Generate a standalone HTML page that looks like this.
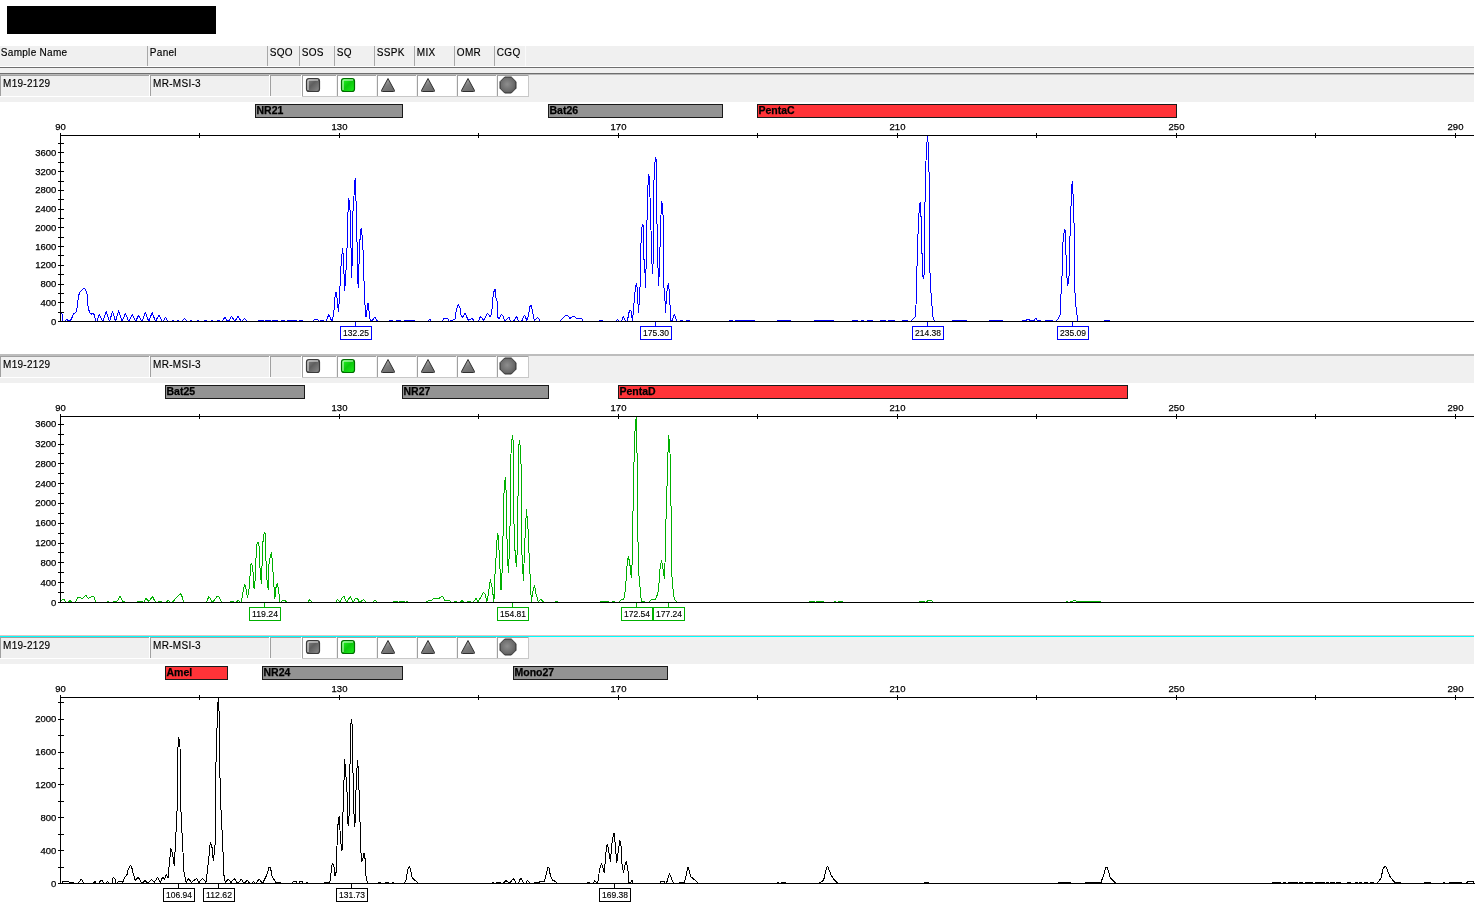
<!DOCTYPE html>
<html><head><meta charset="utf-8"><style>
html,body{margin:0;padding:0;background:#fff;overflow:hidden;}
svg{display:block;will-change:transform;}
text{font-family:"Liberation Sans", sans-serif;}
</style></head><body>
<svg width="1476" height="909" viewBox="0 0 1476 909">
<defs>
<linearGradient id="gsq" x1="0" y1="0" x2="1" y2="1">
<stop offset="0" stop-color="#8a8a8a"/><stop offset="0.45" stop-color="#5e5e5e"/><stop offset="1" stop-color="#8c8c8c"/>
</linearGradient>
<linearGradient id="ggr" x1="0" y1="0" x2="1" y2="1">
<stop offset="0" stop-color="#22ff22"/><stop offset="0.5" stop-color="#0cc80c"/><stop offset="1" stop-color="#1cf01c"/>
</linearGradient>
<linearGradient id="gtri" x1="0.2" y1="0" x2="0.8" y2="1">
<stop offset="0" stop-color="#b4b4b4"/><stop offset="0.5" stop-color="#7c7c7c"/><stop offset="1" stop-color="#6a6a6a"/>
</linearGradient>
<radialGradient id="goct" cx="0.45" cy="0.45" r="0.6">
<stop offset="0" stop-color="#8e8e8e"/><stop offset="0.7" stop-color="#6c6c6c"/><stop offset="1" stop-color="#555"/>
</radialGradient>
</defs>

<rect x="7" y="6" width="209" height="28" fill="#000"/>
<g shape-rendering="crispEdges">
<rect x="0" y="46" width="1474" height="20" fill="#f0f0f0"/>
<rect x="0" y="67" width="1474" height="1" fill="#6e6e6e"/>
<rect x="0" y="68" width="1474" height="5" fill="#f0f0f0"/>
<rect x="147" y="46" width="1" height="20" fill="#a8a8a8"/>
<rect x="267" y="46" width="1" height="20" fill="#a8a8a8"/>
<rect x="299" y="46" width="1" height="20" fill="#a8a8a8"/>
<rect x="334" y="46" width="1" height="20" fill="#a8a8a8"/>
<rect x="374" y="46" width="1" height="20" fill="#a8a8a8"/>
<rect x="414" y="46" width="1" height="20" fill="#a8a8a8"/>
<rect x="454" y="46" width="1" height="20" fill="#a8a8a8"/>
<rect x="494" y="46" width="1" height="20" fill="#a8a8a8"/>
<rect x="525" y="46" width="1" height="20" fill="#fafafa"/>
</g>
<text x="0.8" y="56" font-size="10" letter-spacing="0.3" stroke="#000" stroke-width="0.15" fill="#000">Sample Name</text>
<text x="149.8" y="56" font-size="10" letter-spacing="0.3" stroke="#000" stroke-width="0.15" fill="#000">Panel</text>
<text x="269.8" y="56" font-size="10" letter-spacing="0.3" stroke="#000" stroke-width="0.15" fill="#000">SQO</text>
<text x="301.8" y="56" font-size="10" letter-spacing="0.3" stroke="#000" stroke-width="0.15" fill="#000">SOS</text>
<text x="336.8" y="56" font-size="10" letter-spacing="0.3" stroke="#000" stroke-width="0.15" fill="#000">SQ</text>
<text x="376.8" y="56" font-size="10" letter-spacing="0.3" stroke="#000" stroke-width="0.15" fill="#000">SSPK</text>
<text x="416.8" y="56" font-size="10" letter-spacing="0.3" stroke="#000" stroke-width="0.15" fill="#000">MIX</text>
<text x="456.8" y="56" font-size="10" letter-spacing="0.3" stroke="#000" stroke-width="0.15" fill="#000">OMR</text>
<text x="496.8" y="56" font-size="10" letter-spacing="0.3" stroke="#000" stroke-width="0.15" fill="#000">CGQ</text>
<g shape-rendering="crispEdges">
<rect x="0" y="73" width="1474" height="1" fill="#6e6e6e"/>
<rect x="0" y="74" width="1474" height="1" fill="#b8b8b8"/>
<rect x="0" y="75" width="1474" height="27" fill="#f0f0f0"/>
<rect x="0" y="75" width="149" height="21" fill="#f0f0f0"/>
<rect x="0" y="75" width="149" height="1" fill="#a0a0a0"/>
<rect x="0" y="75" width="1" height="21" fill="#a0a0a0"/>
<rect x="0" y="96" width="150" height="1" fill="#ffffff"/>
<rect x="149" y="75" width="1" height="22" fill="#ffffff"/>
<rect x="150" y="75" width="119" height="21" fill="#f0f0f0"/>
<rect x="150" y="75" width="119" height="1" fill="#a0a0a0"/>
<rect x="150" y="75" width="1" height="21" fill="#a0a0a0"/>
<rect x="150" y="96" width="120" height="1" fill="#ffffff"/>
<rect x="269" y="75" width="1" height="22" fill="#ffffff"/>
<rect x="270" y="75" width="31" height="21" fill="#f0f0f0"/>
<rect x="270" y="75" width="31" height="1" fill="#a0a0a0"/>
<rect x="270" y="75" width="1" height="21" fill="#a0a0a0"/>
<rect x="270" y="96" width="32" height="1" fill="#ffffff"/>
<rect x="301" y="75" width="1" height="22" fill="#ffffff"/>
<rect x="302" y="75" width="34" height="21" fill="#ffffff"/>
<rect x="302" y="75" width="34" height="1" fill="#a0a0a0"/>
<rect x="302" y="75" width="1" height="21" fill="#a0a0a0"/>
<rect x="302" y="96" width="35" height="1" fill="#c8c8c8"/>
<rect x="337" y="75" width="39" height="21" fill="#ffffff"/>
<rect x="337" y="75" width="39" height="1" fill="#a0a0a0"/>
<rect x="337" y="75" width="1" height="21" fill="#a0a0a0"/>
<rect x="337" y="96" width="40" height="1" fill="#c8c8c8"/>
<rect x="377" y="75" width="39" height="21" fill="#ffffff"/>
<rect x="377" y="75" width="39" height="1" fill="#a0a0a0"/>
<rect x="377" y="75" width="1" height="21" fill="#a0a0a0"/>
<rect x="377" y="96" width="40" height="1" fill="#c8c8c8"/>
<rect x="417" y="75" width="39" height="21" fill="#ffffff"/>
<rect x="417" y="75" width="39" height="1" fill="#a0a0a0"/>
<rect x="417" y="75" width="1" height="21" fill="#a0a0a0"/>
<rect x="417" y="96" width="40" height="1" fill="#c8c8c8"/>
<rect x="457" y="75" width="39" height="21" fill="#ffffff"/>
<rect x="457" y="75" width="39" height="1" fill="#a0a0a0"/>
<rect x="457" y="75" width="1" height="21" fill="#a0a0a0"/>
<rect x="457" y="96" width="40" height="1" fill="#c8c8c8"/>
<rect x="497" y="75" width="31" height="21" fill="#ffffff"/>
<rect x="497" y="75" width="31" height="1" fill="#a0a0a0"/>
<rect x="497" y="75" width="1" height="21" fill="#a0a0a0"/>
<rect x="497" y="96" width="32" height="1" fill="#c8c8c8"/>
<rect x="528" y="75" width="1" height="22" fill="#c8c8c8"/>
</g>
<text x="3" y="86.5" font-size="10" letter-spacing="0.3" stroke="#000" stroke-width="0.15">M19-2129</text>
<text x="153" y="86.5" font-size="10" letter-spacing="0.3" stroke="#000" stroke-width="0.15">MR-MSI-3</text>
<rect x="306.5" y="78.5" width="13" height="13" rx="2.5" fill="url(#gsq)" stroke="#3a3a3a" stroke-width="1.2"/><path d="M308 90 V80.5 Q308 80 309 80 H318" fill="none" stroke="#fff" stroke-opacity="0.85" stroke-width="1"/>
<rect x="341.5" y="78.5" width="13" height="13" rx="2.5" fill="url(#ggr)" stroke="#006a00" stroke-width="1.2"/><path d="M343 90 V80.5 Q343 80 344 80 H353" fill="none" stroke="#fff" stroke-opacity="0.85" stroke-width="1"/>
<path d="M388 78.5 L394.5 90.5 Q395 91.5 393.5 91.5 H382.5 Q381 91.5 381.5 90.5 Z" fill="url(#gtri)" stroke="#2e2e2e" stroke-width="1"/>
<path d="M428 78.5 L434.5 90.5 Q435 91.5 433.5 91.5 H422.5 Q421 91.5 421.5 90.5 Z" fill="url(#gtri)" stroke="#2e2e2e" stroke-width="1"/>
<path d="M468 78.5 L474.5 90.5 Q475 91.5 473.5 91.5 H462.5 Q461 91.5 461.5 90.5 Z" fill="url(#gtri)" stroke="#2e2e2e" stroke-width="1"/>
<polygon points="504.7,77.0 511.3,77.0 516.0,81.7 516.0,88.3 511.3,93.0 504.7,93.0 500.0,88.3 500.0,81.7" fill="url(#goct)" stroke="#333" stroke-width="1"/>
<polyline points="60.70,311.80 62.00,314.00 63.10,321.50 65.00,321.50 66.80,319.20 69.20,321.50 71.20,319.30 73.60,313.90 75.80,312.50 77.60,305.70 78.30,296.30 80.00,292.20 83.10,289.10 84.40,288.10 86.10,291.50 87.50,295.60 87.70,305.00 89.50,312.50 91.20,314.20 92.60,313.20 94.60,315.20 95.60,321.50 96.96,321.50 99.33,314.55 102.72,321.50 106.10,311.50 109.49,321.50 112.54,311.50 115.59,321.50 118.64,310.49 122.02,321.50 125.41,313.54 128.80,321.50 132.19,314.55 135.57,321.50 138.62,315.23 142.01,321.50 145.40,312.52 148.79,321.50 152.17,312.52 155.56,321.50 157.59,317.26 155.00,321.50 155.50,321.50 159.00,315.20 162.50,321.50 163.00,321.50 165.50,317.30 168.00,321.50 170.50,321.50 173.00,320.50 175.50,321.50 176.50,321.50 178.00,320.50 179.50,321.50 182.00,321.50 184.50,318.30 187.00,321.50 189.50,321.50 191.00,320.50 192.50,321.50 195.50,321.50 198.00,320.50 200.50,321.50 202.50,321.50 205.50,320.50 208.50,321.50 209.50,321.50 212.00,320.50 214.50,321.50 216.50,321.50 218.50,320.50 220.50,321.50 222.00,321.50 224.80,317.30 227.60,321.50 228.40,321.50 231.60,316.30 234.80,321.50 234.80,321.50 238.00,316.30 241.20,321.50 241.60,321.50 244.40,318.60 247.20,321.50 249.50,321.50 258.20,321.50 259.00,320.50 263.00,320.50 263.80,321.50 264.80,321.50 265.60,320.50 270.30,320.50 271.10,321.50 272.20,321.50 273.00,320.50 277.00,320.50 277.80,321.50 281.00,321.50 281.80,320.50 283.90,320.50 284.70,321.50 287.20,321.50 288.00,320.50 296.00,320.50 296.80,321.50 299.20,321.50 300.00,320.50 302.00,320.50 302.80,321.50 313.60,321.50 314.40,319.10 317.80,319.10 318.60,321.50 320.20,321.50 321.00,320.50 323.80,320.50 324.60,321.50 325.90,321.50 328.80,314.60 331.90,321.50 333.60,315.00 335.30,292.80 336.50,292.80 338.50,312.40 339.90,289.40 340.70,269.70 342.50,247.60 343.30,256.10 344.70,291.10 346.70,258.70 348.40,198.10 349.80,202.40 351.80,278.30 353.00,210.90 355.20,177.70 356.10,203.30 358.10,287.60 360.40,229.70 361.50,228.00 362.90,246.70 364.60,299.60 366.00,316.60 368.00,303.30 370.20,320.50 372.30,320.50 374.80,317.00 377.70,321.50 389.20,321.50 390.00,320.50 392.00,320.50 392.80,321.50 396.20,321.50 397.00,320.50 400.00,320.50 400.80,321.50 404.20,321.50 405.00,320.50 410.00,320.50 410.80,321.50 411.20,321.50 412.00,320.50 414.50,320.50 415.30,321.50 428.00,321.50 429.90,319.20 431.50,321.50 442.00,321.50 444.00,318.20 447.50,318.20 449.00,321.50 452.20,320.50 455.00,318.90 456.30,310.70 458.30,304.30 460.00,308.00 460.70,314.80 462.40,317.50 465.10,313.50 468.50,320.50 472.20,318.20 474.40,321.50 478.50,321.50 480.50,316.20 483.90,320.50 487.60,313.20 490.30,317.30 491.70,313.20 492.70,299.00 493.70,292.20 495.10,289.10 495.70,297.60 496.80,298.30 497.40,306.40 497.80,317.30 499.10,319.30 501.20,314.20 503.20,316.20 504.60,321.50 509.00,317.30 510.70,321.50 513.40,321.50 516.70,316.60 518.40,321.50 521.50,321.50 524.50,315.20 526.90,320.50 528.60,315.20 529.60,307.10 531.00,305.40 532.30,310.50 534.40,320.50 537.70,317.30 540.50,321.50 559.40,321.50 560.80,320.50 564.20,316.60 566.20,315.20 567.50,315.40 570.00,318.40 572.90,316.40 574.40,316.60 576.40,318.40 581.60,318.40 583.30,321.50 588.80,321.50 590.00,321.50 599.20,321.50 600.00,320.50 602.00,320.50 602.80,321.50 616.00,321.50 617.50,319.40 619.50,321.50 621.40,321.50 623.40,316.60 625.90,321.50 627.40,321.50 628.60,313.70 629.80,310.20 631.00,311.20 632.50,320.50 633.40,310.20 634.40,298.40 635.40,288.50 636.40,283.00 637.40,289.50 638.40,313.20 639.40,300.30 640.40,279.00 641.20,232.20 642.40,224.00 643.30,226.20 643.30,258.80 644.30,259.80 645.80,287.50 646.30,245.90 647.30,209.90 648.30,174.30 649.60,178.20 650.00,197.00 651.00,230.20 652.30,273.60 653.20,261.70 653.50,194.00 654.50,167.30 655.50,156.90 656.70,162.90 656.90,223.80 657.70,224.80 657.70,259.80 658.70,285.50 659.70,258.80 660.50,229.20 661.50,201.00 662.70,206.40 663.40,225.20 663.60,287.50 664.60,288.50 665.40,313.20 666.60,294.40 667.60,286.50 668.60,283.50 669.60,297.40 670.80,320.50 672.00,320.50 674.50,314.20 676.50,320.50 677.50,321.50 680.20,321.50 681.00,320.50 682.00,320.50 682.80,321.50 686.20,321.50 687.00,320.50 689.00,320.50 689.80,321.50 729.20,321.50 730.00,320.50 732.00,320.50 732.80,321.50 735.20,321.50 736.00,320.50 740.00,320.50 740.80,321.50 741.20,321.50 742.00,320.50 748.00,320.50 748.80,321.50 749.20,321.50 750.00,320.50 754.00,320.50 754.80,321.50 777.20,321.50 778.00,320.50 790.00,320.50 790.80,321.50 814.20,321.50 815.00,320.50 833.00,320.50 833.80,321.50 852.20,321.50 853.00,320.50 857.00,320.50 857.80,321.50 861.20,321.50 862.00,320.50 863.00,320.50 863.80,321.50 867.20,321.50 868.00,320.50 872.00,320.50 872.80,321.50 880.20,321.50 881.00,320.50 885.00,320.50 885.80,321.50 887.80,321.50 888.60,320.50 894.00,320.50 894.80,321.50 902.20,321.50 903.00,320.50 907.00,320.50 907.80,321.50 910.50,321.50 915.40,316.30 916.00,305.30 916.50,291.00 917.40,247.00 918.50,223.30 919.30,207.40 920.10,202.00 921.20,219.50 921.50,241.50 923.10,278.90 924.20,274.50 924.40,223.90 925.50,184.80 926.20,152.40 927.50,135.30 928.40,147.40 929.20,179.90 929.50,261.90 930.80,289.90 932.10,307.00 933.00,317.40 934.70,321.50 936.00,321.50 952.20,321.50 953.00,320.50 966.80,320.50 967.60,321.50 989.20,321.50 990.00,320.50 1002.00,320.50 1002.80,321.50 1022.20,321.50 1023.00,320.50 1026.00,320.50 1026.80,321.50 1025.90,321.50 1026.70,319.20 1029.70,319.20 1030.50,321.50 1029.20,321.50 1030.00,320.50 1033.00,320.50 1033.80,321.50 1034.00,320.50 1035.80,318.20 1037.50,320.50 1040.00,320.50 1041.00,321.50 1049.00,320.50 1052.00,320.50 1053.00,321.50 1055.30,321.50 1058.40,318.40 1060.10,314.50 1060.60,301.30 1061.40,288.10 1062.30,270.50 1063.20,235.40 1065.00,229.20 1065.90,249.90 1066.30,267.90 1067.60,286.30 1068.90,278.90 1069.80,260.00 1070.30,206.30 1071.10,205.80 1071.60,187.30 1072.50,181.20 1073.30,200.60 1074.20,228.30 1074.60,285.00 1075.50,303.00 1076.80,313.20 1078.10,321.50 1079.00,321.50 1103.70,321.50 1104.50,320.50 1109.80,320.50 1110.60,321.50 1474.00,321.50" fill="none" stroke="#0000ff" stroke-width="1" stroke-linejoin="bevel" shape-rendering="crispEdges"/>
<g shape-rendering="crispEdges" fill="#0000ff"><rect x="355" y="322" width="1" height="5"/><rect x="340" y="326" width="32" height="1"/><rect x="340" y="339" width="32" height="1"/><rect x="340" y="326" width="1" height="14"/><rect x="371" y="326" width="1" height="14"/></g>
<text x="343" y="336" font-size="9.6" textLength="26" lengthAdjust="spacingAndGlyphs" fill="#000" stroke="#000" stroke-width="0.15">132.25</text>
<g shape-rendering="crispEdges" fill="#0000ff"><rect x="655" y="322" width="1" height="5"/><rect x="640" y="326" width="32" height="1"/><rect x="640" y="339" width="32" height="1"/><rect x="640" y="326" width="1" height="14"/><rect x="671" y="326" width="1" height="14"/></g>
<text x="643" y="336" font-size="9.6" textLength="26" lengthAdjust="spacingAndGlyphs" fill="#000" stroke="#000" stroke-width="0.15">175.30</text>
<g shape-rendering="crispEdges" fill="#0000ff"><rect x="927" y="322" width="1" height="5"/><rect x="912" y="326" width="32" height="1"/><rect x="912" y="339" width="32" height="1"/><rect x="912" y="326" width="1" height="14"/><rect x="943" y="326" width="1" height="14"/></g>
<text x="915" y="336" font-size="9.6" textLength="26" lengthAdjust="spacingAndGlyphs" fill="#000" stroke="#000" stroke-width="0.15">214.38</text>
<g shape-rendering="crispEdges" fill="#0000ff"><rect x="1072" y="322" width="1" height="5"/><rect x="1057" y="326" width="32" height="1"/><rect x="1057" y="339" width="32" height="1"/><rect x="1057" y="326" width="1" height="14"/><rect x="1088" y="326" width="1" height="14"/></g>
<text x="1060" y="336" font-size="9.6" textLength="26" lengthAdjust="spacingAndGlyphs" fill="#000" stroke="#000" stroke-width="0.15">235.09</text>
<rect x="255.5" y="104.5" width="147" height="13" fill="#939393" stroke="#1a1a1a" stroke-width="1" stroke-linejoin="bevel" shape-rendering="crispEdges"/>
<text x="256.5" y="114" font-size="10.5" font-weight="bold" fill="#000" stroke="#000" stroke-width="0.25">NR21</text>
<rect x="548.5" y="104.5" width="174" height="13" fill="#939393" stroke="#1a1a1a" stroke-width="1" stroke-linejoin="bevel" shape-rendering="crispEdges"/>
<text x="549.5" y="114" font-size="10.5" font-weight="bold" fill="#000" stroke="#000" stroke-width="0.25">Bat26</text>
<rect x="757.5" y="104.5" width="419" height="13" fill="#ff3338" stroke="#1a1a1a" stroke-width="1" stroke-linejoin="bevel" shape-rendering="crispEdges"/>
<text x="758.5" y="114" font-size="10.5" font-weight="bold" fill="#000" stroke="#000" stroke-width="0.25">PentaC</text>
<g shape-rendering="crispEdges" fill="#000">
<rect x="60" y="135" width="1414" height="1"/>
<rect x="60" y="135" width="1" height="187"/>
<rect x="60" y="321" width="1414" height="1"/>
<rect x="60" y="133" width="1" height="5"/>
<rect x="199" y="133" width="1" height="5"/>
<rect x="339" y="133" width="1" height="5"/>
<rect x="478" y="133" width="1" height="5"/>
<rect x="618" y="133" width="1" height="5"/>
<rect x="757" y="133" width="1" height="5"/>
<rect x="897" y="133" width="1" height="5"/>
<rect x="1036" y="133" width="1" height="5"/>
<rect x="1176" y="133" width="1" height="5"/>
<rect x="1315" y="133" width="1" height="5"/>
<rect x="1455" y="133" width="1" height="5"/>
<rect x="58" y="321" width="6" height="1"/>
<rect x="58" y="312" width="6" height="1"/>
<rect x="58" y="302" width="6" height="1"/>
<rect x="58" y="293" width="6" height="1"/>
<rect x="58" y="284" width="6" height="1"/>
<rect x="58" y="274" width="6" height="1"/>
<rect x="58" y="265" width="6" height="1"/>
<rect x="58" y="255" width="6" height="1"/>
<rect x="58" y="246" width="6" height="1"/>
<rect x="58" y="237" width="6" height="1"/>
<rect x="58" y="227" width="6" height="1"/>
<rect x="58" y="218" width="6" height="1"/>
<rect x="58" y="209" width="6" height="1"/>
<rect x="58" y="199" width="6" height="1"/>
<rect x="58" y="190" width="6" height="1"/>
<rect x="58" y="181" width="6" height="1"/>
<rect x="58" y="171" width="6" height="1"/>
<rect x="58" y="162" width="6" height="1"/>
<rect x="58" y="152" width="6" height="1"/>
<rect x="58" y="143" width="6" height="1"/>
</g>
<text x="60.5" y="129.6" font-size="9.5" text-anchor="middle" stroke="#000" stroke-width="0.25">90</text>
<text x="339.5" y="129.6" font-size="9.5" text-anchor="middle" stroke="#000" stroke-width="0.25">130</text>
<text x="618.5" y="129.6" font-size="9.5" text-anchor="middle" stroke="#000" stroke-width="0.25">170</text>
<text x="897.5" y="129.6" font-size="9.5" text-anchor="middle" stroke="#000" stroke-width="0.25">210</text>
<text x="1176.5" y="129.6" font-size="9.5" text-anchor="middle" stroke="#000" stroke-width="0.25">250</text>
<text x="1455.5" y="129.6" font-size="9.5" text-anchor="middle" stroke="#000" stroke-width="0.25">290</text>
<text x="56.3" y="324.5" font-size="9.5" text-anchor="end" stroke="#000" stroke-width="0.25">0</text>
<text x="56.3" y="305.8" font-size="9.5" text-anchor="end" stroke="#000" stroke-width="0.25">400</text>
<text x="56.3" y="287.1" font-size="9.5" text-anchor="end" stroke="#000" stroke-width="0.25">800</text>
<text x="56.3" y="268.3" font-size="9.5" text-anchor="end" stroke="#000" stroke-width="0.25">1200</text>
<text x="56.3" y="249.6" font-size="9.5" text-anchor="end" stroke="#000" stroke-width="0.25">1600</text>
<text x="56.3" y="230.9" font-size="9.5" text-anchor="end" stroke="#000" stroke-width="0.25">2000</text>
<text x="56.3" y="212.2" font-size="9.5" text-anchor="end" stroke="#000" stroke-width="0.25">2400</text>
<text x="56.3" y="193.4" font-size="9.5" text-anchor="end" stroke="#000" stroke-width="0.25">2800</text>
<text x="56.3" y="174.7" font-size="9.5" text-anchor="end" stroke="#000" stroke-width="0.25">3200</text>
<text x="56.3" y="156.0" font-size="9.5" text-anchor="end" stroke="#000" stroke-width="0.25">3600</text>
<g shape-rendering="crispEdges">
<rect x="0" y="354" width="1474" height="2" fill="#bdbdbd"/>
<rect x="0" y="356" width="1474" height="27" fill="#f0f0f0"/>
<rect x="0" y="356" width="149" height="21" fill="#f0f0f0"/>
<rect x="0" y="356" width="149" height="1" fill="#a0a0a0"/>
<rect x="0" y="356" width="1" height="21" fill="#a0a0a0"/>
<rect x="0" y="377" width="150" height="1" fill="#ffffff"/>
<rect x="149" y="356" width="1" height="22" fill="#ffffff"/>
<rect x="150" y="356" width="119" height="21" fill="#f0f0f0"/>
<rect x="150" y="356" width="119" height="1" fill="#a0a0a0"/>
<rect x="150" y="356" width="1" height="21" fill="#a0a0a0"/>
<rect x="150" y="377" width="120" height="1" fill="#ffffff"/>
<rect x="269" y="356" width="1" height="22" fill="#ffffff"/>
<rect x="270" y="356" width="31" height="21" fill="#f0f0f0"/>
<rect x="270" y="356" width="31" height="1" fill="#a0a0a0"/>
<rect x="270" y="356" width="1" height="21" fill="#a0a0a0"/>
<rect x="270" y="377" width="32" height="1" fill="#ffffff"/>
<rect x="301" y="356" width="1" height="22" fill="#ffffff"/>
<rect x="302" y="356" width="34" height="21" fill="#ffffff"/>
<rect x="302" y="356" width="34" height="1" fill="#a0a0a0"/>
<rect x="302" y="356" width="1" height="21" fill="#a0a0a0"/>
<rect x="302" y="377" width="35" height="1" fill="#c8c8c8"/>
<rect x="337" y="356" width="39" height="21" fill="#ffffff"/>
<rect x="337" y="356" width="39" height="1" fill="#a0a0a0"/>
<rect x="337" y="356" width="1" height="21" fill="#a0a0a0"/>
<rect x="337" y="377" width="40" height="1" fill="#c8c8c8"/>
<rect x="377" y="356" width="39" height="21" fill="#ffffff"/>
<rect x="377" y="356" width="39" height="1" fill="#a0a0a0"/>
<rect x="377" y="356" width="1" height="21" fill="#a0a0a0"/>
<rect x="377" y="377" width="40" height="1" fill="#c8c8c8"/>
<rect x="417" y="356" width="39" height="21" fill="#ffffff"/>
<rect x="417" y="356" width="39" height="1" fill="#a0a0a0"/>
<rect x="417" y="356" width="1" height="21" fill="#a0a0a0"/>
<rect x="417" y="377" width="40" height="1" fill="#c8c8c8"/>
<rect x="457" y="356" width="39" height="21" fill="#ffffff"/>
<rect x="457" y="356" width="39" height="1" fill="#a0a0a0"/>
<rect x="457" y="356" width="1" height="21" fill="#a0a0a0"/>
<rect x="457" y="377" width="40" height="1" fill="#c8c8c8"/>
<rect x="497" y="356" width="31" height="21" fill="#ffffff"/>
<rect x="497" y="356" width="31" height="1" fill="#a0a0a0"/>
<rect x="497" y="356" width="1" height="21" fill="#a0a0a0"/>
<rect x="497" y="377" width="32" height="1" fill="#c8c8c8"/>
<rect x="528" y="356" width="1" height="22" fill="#c8c8c8"/>
</g>
<text x="3" y="367.5" font-size="10" letter-spacing="0.3" stroke="#000" stroke-width="0.15">M19-2129</text>
<text x="153" y="367.5" font-size="10" letter-spacing="0.3" stroke="#000" stroke-width="0.15">MR-MSI-3</text>
<rect x="306.5" y="359.5" width="13" height="13" rx="2.5" fill="url(#gsq)" stroke="#3a3a3a" stroke-width="1.2"/><path d="M308 371 V361.5 Q308 361 309 361 H318" fill="none" stroke="#fff" stroke-opacity="0.85" stroke-width="1"/>
<rect x="341.5" y="359.5" width="13" height="13" rx="2.5" fill="url(#ggr)" stroke="#006a00" stroke-width="1.2"/><path d="M343 371 V361.5 Q343 361 344 361 H353" fill="none" stroke="#fff" stroke-opacity="0.85" stroke-width="1"/>
<path d="M388 359.5 L394.5 371.5 Q395 372.5 393.5 372.5 H382.5 Q381 372.5 381.5 371.5 Z" fill="url(#gtri)" stroke="#2e2e2e" stroke-width="1"/>
<path d="M428 359.5 L434.5 371.5 Q435 372.5 433.5 372.5 H422.5 Q421 372.5 421.5 371.5 Z" fill="url(#gtri)" stroke="#2e2e2e" stroke-width="1"/>
<path d="M468 359.5 L474.5 371.5 Q475 372.5 473.5 372.5 H462.5 Q461 372.5 461.5 371.5 Z" fill="url(#gtri)" stroke="#2e2e2e" stroke-width="1"/>
<polygon points="504.7,358.0 511.3,358.0 516.0,362.7 516.0,369.3 511.3,374.0 504.7,374.0 500.0,369.3 500.0,362.7" fill="url(#goct)" stroke="#333" stroke-width="1"/>
<polyline points="60.00,602.50 62.40,599.40 64.40,599.40 65.80,602.50 68.20,602.50 70.20,600.40 71.90,602.50 75.30,602.50 78.00,597.40 80.40,597.40 82.10,598.60 85.80,595.30 88.50,598.40 91.90,596.50 94.20,596.80 95.60,602.50 106.10,602.50 108.10,601.50 110.20,602.50 112.20,602.50 114.90,601.50 116.90,601.50 120.00,596.50 123.00,601.50 127.80,602.50 128.50,602.50 137.20,602.50 138.00,601.50 142.00,601.50 142.80,602.50 143.50,602.50 146.10,598.40 148.80,601.50 152.50,596.50 155.60,602.50 158.20,602.50 159.00,601.50 161.80,601.50 162.60,602.50 166.20,602.50 168.20,600.40 169.60,601.50 170.90,602.50 173.00,601.50 175.30,599.00 180.40,593.30 182.40,597.40 183.50,602.50 206.20,602.50 208.90,596.50 212.60,602.50 217.30,596.30 219.40,597.40 221.70,602.50 229.40,602.50 230.20,601.50 232.90,601.50 233.70,602.50 236.00,602.50 238.00,600.40 240.70,602.50 241.30,601.50 242.60,594.50 243.50,590.10 244.60,584.20 245.70,586.60 247.50,598.10 248.80,591.00 249.70,581.30 250.60,565.10 251.40,563.30 252.30,566.40 253.20,573.40 254.10,589.30 255.40,577.40 256.30,548.30 257.40,542.20 258.50,542.20 259.40,548.30 260.20,573.90 261.60,583.50 262.40,550.50 263.30,537.30 264.50,532.20 265.50,534.70 266.00,560.70 266.80,577.80 268.20,589.70 269.00,564.20 270.40,555.40 271.50,552.30 272.60,565.10 273.50,579.10 274.80,599.40 276.10,586.60 277.40,583.10 278.70,591.90 280.10,602.50 283.10,600.30 285.30,600.30 286.70,602.50 288.20,602.50 289.00,602.50 290.00,602.50 290.80,602.50 290.20,602.50 291.00,602.50 292.50,602.50 293.30,602.50 295.40,602.50 296.20,602.50 299.00,602.50 299.80,602.50 301.20,602.50 302.00,602.50 304.60,602.50 305.40,602.50 307.50,602.50 309.70,599.60 312.80,602.50 329.70,602.50 330.50,602.50 331.80,602.50 332.60,602.50 335.50,602.50 337.50,599.60 340.20,602.50 341.90,598.00 343.90,596.30 346.70,602.50 350.40,596.30 353.10,602.50 355.50,598.40 357.50,598.40 359.50,602.50 363.60,599.60 366.00,602.50 368.70,602.50 369.50,602.50 371.00,602.50 371.80,602.50 372.50,602.50 375.10,600.20 377.80,602.50 393.10,602.50 393.90,601.50 397.00,601.50 397.80,602.50 398.50,602.50 399.30,601.50 404.70,601.50 405.50,602.50 406.20,602.50 407.00,601.50 407.80,601.50 408.60,602.50 426.10,602.50 428.40,600.40 431.50,600.40 433.50,598.60 438.90,598.40 441.70,596.30 443.30,597.00 444.70,600.40 449.40,600.40 451.10,602.50 453.40,602.50 454.20,601.50 455.90,601.50 456.70,602.50 460.30,602.50 462.00,600.40 464.00,602.50 467.20,602.50 468.00,601.50 470.80,601.50 471.60,602.50 473.20,602.50 475.90,598.40 478.00,601.50 481.10,596.70 483.20,592.50 484.80,593.60 486.90,601.50 488.40,593.60 490.30,579.50 492.10,587.30 493.90,601.50 495.20,569.60 496.60,550.20 497.30,533.50 498.40,536.10 498.90,548.10 499.90,566.40 501.00,589.90 502.60,563.30 503.50,503.20 504.50,483.40 505.50,477.00 506.50,502.20 506.70,530.90 508.30,573.20 509.10,557.00 509.90,541.90 510.50,465.10 511.50,442.30 512.50,434.90 513.40,443.30 513.80,504.70 514.20,540.80 516.40,567.00 517.70,541.30 517.90,506.20 518.60,447.30 519.40,440.00 520.40,448.30 521.40,474.00 521.60,547.60 523.40,581.00 524.50,549.70 525.50,527.20 526.50,509.20 528.20,531.90 529.20,557.00 531.30,601.50 532.90,591.50 534.40,585.20 536.00,593.60 538.10,601.50 541.20,599.30 542.80,601.50 544.00,602.50 555.20,602.50 556.00,601.50 557.00,601.50 557.80,602.50 599.40,602.50 600.20,601.50 608.80,601.50 609.60,602.50 612.10,602.50 612.90,601.50 614.80,601.50 615.60,602.50 615.00,602.50 618.30,602.50 621.60,599.40 623.80,599.10 625.50,589.20 626.60,571.00 627.30,562.20 628.40,556.20 629.90,564.40 631.30,577.60 632.40,558.90 633.30,489.10 634.40,447.10 635.30,423.30 636.40,416.30 637.10,458.90 637.90,504.80 638.10,575.40 639.40,576.50 640.30,592.00 641.40,601.50 649.10,602.50 651.30,599.40 655.70,599.10 657.90,593.00 659.00,583.10 660.10,567.70 661.40,560.60 662.50,565.50 664.50,579.30 665.60,543.00 666.20,508.00 667.60,470.20 668.40,435.20 669.50,442.20 670.60,465.90 671.70,572.70 673.30,593.00 674.40,599.70 677.70,602.50 679.00,602.50 809.20,602.50 810.00,601.50 814.00,601.50 814.80,602.50 816.20,602.50 817.00,601.50 823.60,601.50 824.40,602.50 834.20,602.50 835.00,601.50 835.80,601.50 836.60,602.50 837.70,602.50 838.50,601.50 842.60,601.50 843.40,602.50 919.00,602.50 919.80,601.50 924.70,601.50 925.50,602.50 926.00,602.50 928.50,600.30 931.50,600.30 933.70,602.50 1065.00,602.50 1066.50,601.50 1068.60,602.50 1071.90,601.50 1074.00,600.20 1077.60,601.50 1100.30,601.50 1101.50,602.50 1474.00,602.50" fill="none" stroke="#00b000" stroke-width="1" stroke-linejoin="bevel" shape-rendering="crispEdges"/>
<g shape-rendering="crispEdges" fill="#00b000"><rect x="264" y="603" width="1" height="5"/><rect x="249" y="607" width="32" height="1"/><rect x="249" y="620" width="32" height="1"/><rect x="249" y="607" width="1" height="14"/><rect x="280" y="607" width="1" height="14"/></g>
<text x="252" y="617" font-size="9.6" textLength="26" lengthAdjust="spacingAndGlyphs" fill="#000" stroke="#000" stroke-width="0.15">119.24</text>
<g shape-rendering="crispEdges" fill="#00b000"><rect x="512" y="603" width="1" height="5"/><rect x="497" y="607" width="32" height="1"/><rect x="497" y="620" width="32" height="1"/><rect x="497" y="607" width="1" height="14"/><rect x="528" y="607" width="1" height="14"/></g>
<text x="500" y="617" font-size="9.6" textLength="26" lengthAdjust="spacingAndGlyphs" fill="#000" stroke="#000" stroke-width="0.15">154.81</text>
<g shape-rendering="crispEdges" fill="#00b000"><rect x="636" y="603" width="1" height="5"/><rect x="621" y="607" width="32" height="1"/><rect x="621" y="620" width="32" height="1"/><rect x="621" y="607" width="1" height="14"/><rect x="652" y="607" width="1" height="14"/></g>
<text x="624" y="617" font-size="9.6" textLength="26" lengthAdjust="spacingAndGlyphs" fill="#000" stroke="#000" stroke-width="0.15">172.54</text>
<g shape-rendering="crispEdges" fill="#00b000"><rect x="668" y="603" width="1" height="5"/><rect x="653" y="607" width="32" height="1"/><rect x="653" y="620" width="32" height="1"/><rect x="653" y="607" width="1" height="14"/><rect x="684" y="607" width="1" height="14"/></g>
<text x="656" y="617" font-size="9.6" textLength="26" lengthAdjust="spacingAndGlyphs" fill="#000" stroke="#000" stroke-width="0.15">177.24</text>
<rect x="165.5" y="385.5" width="139" height="13" fill="#939393" stroke="#1a1a1a" stroke-width="1" stroke-linejoin="bevel" shape-rendering="crispEdges"/>
<text x="166.5" y="395" font-size="10.5" font-weight="bold" fill="#000" stroke="#000" stroke-width="0.25">Bat25</text>
<rect x="402.5" y="385.5" width="146" height="13" fill="#939393" stroke="#1a1a1a" stroke-width="1" stroke-linejoin="bevel" shape-rendering="crispEdges"/>
<text x="403.5" y="395" font-size="10.5" font-weight="bold" fill="#000" stroke="#000" stroke-width="0.25">NR27</text>
<rect x="618.5" y="385.5" width="509" height="13" fill="#ff3338" stroke="#1a1a1a" stroke-width="1" stroke-linejoin="bevel" shape-rendering="crispEdges"/>
<text x="619.5" y="395" font-size="10.5" font-weight="bold" fill="#000" stroke="#000" stroke-width="0.25">PentaD</text>
<g shape-rendering="crispEdges" fill="#000">
<rect x="60" y="416" width="1414" height="1"/>
<rect x="60" y="416" width="1" height="187"/>
<rect x="60" y="602" width="1414" height="1"/>
<rect x="60" y="414" width="1" height="5"/>
<rect x="199" y="414" width="1" height="5"/>
<rect x="339" y="414" width="1" height="5"/>
<rect x="478" y="414" width="1" height="5"/>
<rect x="618" y="414" width="1" height="5"/>
<rect x="757" y="414" width="1" height="5"/>
<rect x="897" y="414" width="1" height="5"/>
<rect x="1036" y="414" width="1" height="5"/>
<rect x="1176" y="414" width="1" height="5"/>
<rect x="1315" y="414" width="1" height="5"/>
<rect x="1455" y="414" width="1" height="5"/>
<rect x="58" y="602" width="6" height="1"/>
<rect x="58" y="592" width="6" height="1"/>
<rect x="58" y="582" width="6" height="1"/>
<rect x="58" y="572" width="6" height="1"/>
<rect x="58" y="562" width="6" height="1"/>
<rect x="58" y="552" width="6" height="1"/>
<rect x="58" y="543" width="6" height="1"/>
<rect x="58" y="533" width="6" height="1"/>
<rect x="58" y="523" width="6" height="1"/>
<rect x="58" y="513" width="6" height="1"/>
<rect x="58" y="503" width="6" height="1"/>
<rect x="58" y="493" width="6" height="1"/>
<rect x="58" y="483" width="6" height="1"/>
<rect x="58" y="473" width="6" height="1"/>
<rect x="58" y="463" width="6" height="1"/>
<rect x="58" y="453" width="6" height="1"/>
<rect x="58" y="444" width="6" height="1"/>
<rect x="58" y="434" width="6" height="1"/>
<rect x="58" y="424" width="6" height="1"/>
</g>
<text x="60.5" y="410.6" font-size="9.5" text-anchor="middle" stroke="#000" stroke-width="0.25">90</text>
<text x="339.5" y="410.6" font-size="9.5" text-anchor="middle" stroke="#000" stroke-width="0.25">130</text>
<text x="618.5" y="410.6" font-size="9.5" text-anchor="middle" stroke="#000" stroke-width="0.25">170</text>
<text x="897.5" y="410.6" font-size="9.5" text-anchor="middle" stroke="#000" stroke-width="0.25">210</text>
<text x="1176.5" y="410.6" font-size="9.5" text-anchor="middle" stroke="#000" stroke-width="0.25">250</text>
<text x="1455.5" y="410.6" font-size="9.5" text-anchor="middle" stroke="#000" stroke-width="0.25">290</text>
<text x="56.3" y="605.5" font-size="9.5" text-anchor="end" stroke="#000" stroke-width="0.25">0</text>
<text x="56.3" y="585.7" font-size="9.5" text-anchor="end" stroke="#000" stroke-width="0.25">400</text>
<text x="56.3" y="565.9" font-size="9.5" text-anchor="end" stroke="#000" stroke-width="0.25">800</text>
<text x="56.3" y="546.1" font-size="9.5" text-anchor="end" stroke="#000" stroke-width="0.25">1200</text>
<text x="56.3" y="526.3" font-size="9.5" text-anchor="end" stroke="#000" stroke-width="0.25">1600</text>
<text x="56.3" y="506.4" font-size="9.5" text-anchor="end" stroke="#000" stroke-width="0.25">2000</text>
<text x="56.3" y="486.6" font-size="9.5" text-anchor="end" stroke="#000" stroke-width="0.25">2400</text>
<text x="56.3" y="466.8" font-size="9.5" text-anchor="end" stroke="#000" stroke-width="0.25">2800</text>
<text x="56.3" y="447.0" font-size="9.5" text-anchor="end" stroke="#000" stroke-width="0.25">3200</text>
<text x="56.3" y="427.2" font-size="9.5" text-anchor="end" stroke="#000" stroke-width="0.25">3600</text>
<g shape-rendering="crispEdges">
<rect x="0" y="635" width="1474" height="1" fill="#d8c8c8"/>
<rect x="0" y="636" width="1474" height="1" fill="#00ffff"/>
<rect x="0" y="637" width="1474" height="27" fill="#f0f0f0"/>
<rect x="0" y="637" width="149" height="21" fill="#f0f0f0"/>
<rect x="0" y="637" width="149" height="1" fill="#a0a0a0"/>
<rect x="0" y="637" width="1" height="21" fill="#a0a0a0"/>
<rect x="0" y="658" width="150" height="1" fill="#ffffff"/>
<rect x="149" y="637" width="1" height="22" fill="#ffffff"/>
<rect x="150" y="637" width="119" height="21" fill="#f0f0f0"/>
<rect x="150" y="637" width="119" height="1" fill="#a0a0a0"/>
<rect x="150" y="637" width="1" height="21" fill="#a0a0a0"/>
<rect x="150" y="658" width="120" height="1" fill="#ffffff"/>
<rect x="269" y="637" width="1" height="22" fill="#ffffff"/>
<rect x="270" y="637" width="31" height="21" fill="#f0f0f0"/>
<rect x="270" y="637" width="31" height="1" fill="#a0a0a0"/>
<rect x="270" y="637" width="1" height="21" fill="#a0a0a0"/>
<rect x="270" y="658" width="32" height="1" fill="#ffffff"/>
<rect x="301" y="637" width="1" height="22" fill="#ffffff"/>
<rect x="302" y="637" width="34" height="21" fill="#ffffff"/>
<rect x="302" y="637" width="34" height="1" fill="#a0a0a0"/>
<rect x="302" y="637" width="1" height="21" fill="#a0a0a0"/>
<rect x="302" y="658" width="35" height="1" fill="#c8c8c8"/>
<rect x="337" y="637" width="39" height="21" fill="#ffffff"/>
<rect x="337" y="637" width="39" height="1" fill="#a0a0a0"/>
<rect x="337" y="637" width="1" height="21" fill="#a0a0a0"/>
<rect x="337" y="658" width="40" height="1" fill="#c8c8c8"/>
<rect x="377" y="637" width="39" height="21" fill="#ffffff"/>
<rect x="377" y="637" width="39" height="1" fill="#a0a0a0"/>
<rect x="377" y="637" width="1" height="21" fill="#a0a0a0"/>
<rect x="377" y="658" width="40" height="1" fill="#c8c8c8"/>
<rect x="417" y="637" width="39" height="21" fill="#ffffff"/>
<rect x="417" y="637" width="39" height="1" fill="#a0a0a0"/>
<rect x="417" y="637" width="1" height="21" fill="#a0a0a0"/>
<rect x="417" y="658" width="40" height="1" fill="#c8c8c8"/>
<rect x="457" y="637" width="39" height="21" fill="#ffffff"/>
<rect x="457" y="637" width="39" height="1" fill="#a0a0a0"/>
<rect x="457" y="637" width="1" height="21" fill="#a0a0a0"/>
<rect x="457" y="658" width="40" height="1" fill="#c8c8c8"/>
<rect x="497" y="637" width="31" height="21" fill="#ffffff"/>
<rect x="497" y="637" width="31" height="1" fill="#a0a0a0"/>
<rect x="497" y="637" width="1" height="21" fill="#a0a0a0"/>
<rect x="497" y="658" width="32" height="1" fill="#c8c8c8"/>
<rect x="528" y="637" width="1" height="22" fill="#c8c8c8"/>
</g>
<text x="3" y="648.5" font-size="10" letter-spacing="0.3" stroke="#000" stroke-width="0.15">M19-2129</text>
<text x="153" y="648.5" font-size="10" letter-spacing="0.3" stroke="#000" stroke-width="0.15">MR-MSI-3</text>
<rect x="306.5" y="640.5" width="13" height="13" rx="2.5" fill="url(#gsq)" stroke="#3a3a3a" stroke-width="1.2"/><path d="M308 652 V642.5 Q308 642 309 642 H318" fill="none" stroke="#fff" stroke-opacity="0.85" stroke-width="1"/>
<rect x="341.5" y="640.5" width="13" height="13" rx="2.5" fill="url(#ggr)" stroke="#006a00" stroke-width="1.2"/><path d="M343 652 V642.5 Q343 642 344 642 H353" fill="none" stroke="#fff" stroke-opacity="0.85" stroke-width="1"/>
<path d="M388 640.5 L394.5 652.5 Q395 653.5 393.5 653.5 H382.5 Q381 653.5 381.5 652.5 Z" fill="url(#gtri)" stroke="#2e2e2e" stroke-width="1"/>
<path d="M428 640.5 L434.5 652.5 Q435 653.5 433.5 653.5 H422.5 Q421 653.5 421.5 652.5 Z" fill="url(#gtri)" stroke="#2e2e2e" stroke-width="1"/>
<path d="M468 640.5 L474.5 652.5 Q475 653.5 473.5 653.5 H462.5 Q461 653.5 461.5 652.5 Z" fill="url(#gtri)" stroke="#2e2e2e" stroke-width="1"/>
<polygon points="504.7,639.0 511.3,639.0 516.0,643.7 516.0,650.3 511.3,655.0 504.7,655.0 500.0,650.3 500.0,643.7" fill="url(#goct)" stroke="#333" stroke-width="1"/>
<polyline points="60.50,883.50 62.20,883.50 63.00,881.40 68.80,881.40 69.60,883.50 68.70,883.50 69.50,882.50 73.60,882.50 74.40,883.50 78.00,883.50 81.40,879.00 83.70,883.50 93.20,883.50 94.90,881.30 96.60,883.50 99.50,883.50 100.30,880.40 102.00,880.60 104.10,883.50 106.40,883.50 107.50,881.30 109.50,883.50 111.90,883.50 113.20,877.40 115.60,879.40 115.90,883.50 117.50,883.50 118.30,881.30 121.70,881.30 123.00,882.50 124.40,877.40 127.10,874.60 128.10,869.90 130.50,865.20 131.80,867.50 132.90,872.60 135.20,880.40 138.30,877.40 142.00,883.50 145.10,880.40 147.80,883.50 151.50,879.40 154.20,882.50 157.60,877.40 160.20,882.50 162.80,876.80 164.50,879.90 166.20,874.20 168.00,877.70 169.70,859.50 170.90,848.30 172.60,853.50 174.30,866.40 175.70,838.80 177.10,809.40 178.00,747.30 178.80,737.30 180.00,747.30 180.90,809.40 182.30,838.80 184.00,871.60 186.10,882.50 188.70,878.50 191.30,882.50 196.50,878.50 199.00,882.50 202.50,878.20 206.00,882.50 208.50,861.30 210.30,842.30 212.00,847.40 213.40,861.30 215.10,844.00 215.50,780.10 216.70,738.00 217.60,708.00 218.30,697.50 218.90,701.00 219.60,760.00 220.60,802.50 222.40,837.10 224.10,877.70 225.50,882.50 228.40,878.90 231.00,882.50 234.40,878.40 235.40,880.40 237.80,883.50 241.50,879.00 243.90,883.50 247.60,880.10 249.60,883.50 251.30,883.50 253.40,881.30 255.70,883.50 259.10,879.00 262.50,883.50 266.60,875.30 267.90,871.90 268.60,867.50 270.00,867.50 271.30,871.30 272.00,876.00 274.70,880.70 276.10,882.50 280.00,882.50 280.80,883.50 292.50,883.50 293.30,881.30 296.40,881.30 297.20,883.50 298.70,883.50 299.50,881.30 302.20,881.30 303.00,883.50 305.40,883.50 306.20,882.50 306.90,882.50 307.70,883.50 324.10,883.50 324.90,882.50 328.00,882.50 328.80,883.50 329.60,883.50 330.60,878.00 331.60,865.90 332.60,863.60 334.10,866.90 335.00,875.50 336.20,871.90 337.00,846.10 337.70,829.40 338.40,818.80 339.40,816.30 340.00,830.40 341.00,844.10 342.00,850.70 342.70,822.30 343.60,794.20 344.60,759.00 345.60,770.90 347.20,795.10 348.10,826.40 349.30,813.20 349.70,786.70 350.50,727.30 351.50,719.10 352.20,726.30 353.20,783.30 353.90,812.20 354.90,827.40 355.70,797.60 356.70,774.20 357.40,760.00 358.40,769.40 359.10,793.20 360.00,821.80 361.30,862.30 363.00,857.80 364.00,853.50 365.30,859.80 366.00,876.00 367.50,883.50 368.50,883.50 378.30,883.50 379.10,882.50 380.80,882.50 381.60,883.50 384.40,883.50 385.20,882.50 388.00,882.50 388.80,883.50 392.20,883.50 393.00,882.50 393.70,882.50 394.50,883.50 404.20,883.50 406.60,879.00 407.30,870.60 409.30,866.50 410.30,868.90 411.30,873.30 412.30,878.00 417.40,882.50 418.40,883.50 491.60,883.50 492.40,882.50 493.00,882.50 493.80,883.50 496.30,883.50 497.10,882.50 500.80,882.50 501.60,883.50 503.20,883.50 505.90,880.40 508.60,882.50 509.30,883.50 513.40,878.40 516.40,883.50 518.40,883.50 520.50,878.40 521.50,879.00 523.90,883.50 525.60,883.50 527.60,880.40 530.60,883.50 533.50,883.50 534.40,882.50 539.80,882.50 540.10,881.10 544.90,881.10 545.20,876.70 546.60,873.30 547.60,867.50 548.90,867.50 550.60,876.70 552.70,880.10 554.30,880.70 557.40,883.50 558.50,883.50 587.20,883.50 588.00,882.50 589.80,882.50 590.60,883.50 593.30,883.50 594.70,880.50 596.90,883.50 598.20,880.30 599.50,869.50 601.50,863.30 603.00,868.20 604.30,873.40 605.50,858.00 606.60,846.10 607.40,844.40 608.80,851.40 610.50,862.40 611.40,847.50 612.70,838.20 614.00,833.40 615.40,845.30 616.70,863.30 618.40,850.50 619.80,840.40 621.10,846.10 622.00,863.80 623.50,873.40 625.00,864.60 626.40,860.70 628.10,871.70 629.00,882.50 630.30,883.50 632.10,880.50 633.40,883.50 659.90,883.50 660.70,881.40 664.20,881.40 665.00,883.50 666.40,883.50 669.50,873.40 673.50,883.50 679.20,883.50 680.00,882.50 683.60,882.50 684.40,883.50 685.40,878.30 688.00,866.80 690.70,876.50 696.40,881.40 698.10,883.50 776.40,883.50 777.20,882.50 778.60,882.50 779.40,883.50 781.20,883.50 782.00,882.50 785.40,882.50 786.20,883.50 817.90,883.50 822.60,881.40 824.00,878.50 826.70,866.90 828.00,866.90 830.80,874.40 834.10,879.80 838.20,883.50 839.00,883.50 923.40,883.50 924.20,882.50 928.00,882.50 928.80,883.50 1057.40,883.50 1058.20,882.50 1069.90,882.50 1070.70,883.50 1098.70,882.50 1101.00,882.50 1104.10,873.40 1105.70,867.50 1107.30,867.50 1110.40,878.00 1115.80,883.50 1117.00,883.50 1272.20,883.50 1273.00,882.50 1275.09,882.50 1275.89,883.50 1276.06,883.50 1276.86,882.50 1280.65,882.50 1281.45,883.50 1282.60,883.50 1283.40,882.50 1285.06,882.50 1285.86,883.50 1287.58,883.50 1288.38,882.50 1291.05,882.50 1291.85,883.50 1292.22,883.50 1293.02,882.50 1297.01,882.50 1297.81,883.50 1298.79,883.50 1299.59,882.50 1302.47,882.50 1303.27,883.50 1304.44,883.50 1305.24,882.50 1307.12,882.50 1307.92,883.50 1308.12,883.50 1308.92,882.50 1312.74,882.50 1313.54,883.50 1314.92,883.50 1315.72,882.50 1318.90,882.50 1319.70,883.50 1319.92,883.50 1320.72,882.50 1324.61,882.50 1325.41,883.50 1325.91,883.50 1326.71,882.50 1328.29,882.50 1329.09,883.50 1329.94,883.50 1330.74,882.50 1334.03,882.50 1334.83,883.50 1336.16,883.50 1336.96,882.50 1340.77,882.50 1341.57,883.50 1347.20,883.50 1348.00,882.50 1350.37,882.50 1351.17,883.50 1354.46,883.50 1355.26,882.50 1356.96,882.50 1357.76,883.50 1359.26,883.50 1360.06,882.50 1361.61,882.50 1362.41,883.50 1364.29,883.50 1365.09,882.50 1366.98,882.50 1367.78,883.50 1370.20,883.50 1371.00,882.50 1373.67,882.50 1374.47,883.50 1377.10,883.50 1380.90,878.30 1383.20,868.40 1385.50,866.10 1387.00,869.10 1390.10,876.80 1394.70,882.50 1394.70,883.50 1395.50,882.50 1400.80,882.50 1401.60,883.50 1423.80,883.50 1424.60,882.50 1430.70,882.50 1431.50,883.50 1442.70,883.50 1443.50,882.50 1444.30,882.50 1445.10,883.50 1449.00,883.50 1449.80,882.50 1461.30,882.50 1462.10,883.50 1466.60,883.50 1467.40,881.40 1473.50,881.40 1474.30,883.50 1474.00,883.50" fill="none" stroke="#000000" stroke-width="1" stroke-linejoin="bevel" shape-rendering="crispEdges"/>
<g shape-rendering="crispEdges" fill="#000000"><rect x="178" y="884" width="1" height="5"/><rect x="163" y="888" width="32" height="1"/><rect x="163" y="901" width="32" height="1"/><rect x="163" y="888" width="1" height="14"/><rect x="194" y="888" width="1" height="14"/></g>
<text x="166" y="898" font-size="9.6" textLength="26" lengthAdjust="spacingAndGlyphs" fill="#000" stroke="#000" stroke-width="0.15">106.94</text>
<g shape-rendering="crispEdges" fill="#000000"><rect x="218" y="884" width="1" height="5"/><rect x="203" y="888" width="32" height="1"/><rect x="203" y="901" width="32" height="1"/><rect x="203" y="888" width="1" height="14"/><rect x="234" y="888" width="1" height="14"/></g>
<text x="206" y="898" font-size="9.6" textLength="26" lengthAdjust="spacingAndGlyphs" fill="#000" stroke="#000" stroke-width="0.15">112.62</text>
<g shape-rendering="crispEdges" fill="#000000"><rect x="351" y="884" width="1" height="5"/><rect x="336" y="888" width="32" height="1"/><rect x="336" y="901" width="32" height="1"/><rect x="336" y="888" width="1" height="14"/><rect x="367" y="888" width="1" height="14"/></g>
<text x="339" y="898" font-size="9.6" textLength="26" lengthAdjust="spacingAndGlyphs" fill="#000" stroke="#000" stroke-width="0.15">131.73</text>
<g shape-rendering="crispEdges" fill="#000000"><rect x="614" y="884" width="1" height="5"/><rect x="599" y="888" width="32" height="1"/><rect x="599" y="901" width="32" height="1"/><rect x="599" y="888" width="1" height="14"/><rect x="630" y="888" width="1" height="14"/></g>
<text x="602" y="898" font-size="9.6" textLength="26" lengthAdjust="spacingAndGlyphs" fill="#000" stroke="#000" stroke-width="0.15">169.38</text>
<rect x="165.5" y="666.5" width="62" height="13" fill="#ff3338" stroke="#1a1a1a" stroke-width="1" stroke-linejoin="bevel" shape-rendering="crispEdges"/>
<text x="166.5" y="676" font-size="10.5" font-weight="bold" fill="#000" stroke="#000" stroke-width="0.25">Amel</text>
<rect x="262.5" y="666.5" width="140" height="13" fill="#939393" stroke="#1a1a1a" stroke-width="1" stroke-linejoin="bevel" shape-rendering="crispEdges"/>
<text x="263.5" y="676" font-size="10.5" font-weight="bold" fill="#000" stroke="#000" stroke-width="0.25">NR24</text>
<rect x="513.5" y="666.5" width="154" height="13" fill="#939393" stroke="#1a1a1a" stroke-width="1" stroke-linejoin="bevel" shape-rendering="crispEdges"/>
<text x="514.5" y="676" font-size="10.5" font-weight="bold" fill="#000" stroke="#000" stroke-width="0.25">Mono27</text>
<g shape-rendering="crispEdges" fill="#000">
<rect x="60" y="697" width="1414" height="1"/>
<rect x="60" y="697" width="1" height="187"/>
<rect x="60" y="883" width="1414" height="1"/>
<rect x="60" y="695" width="1" height="5"/>
<rect x="199" y="695" width="1" height="5"/>
<rect x="339" y="695" width="1" height="5"/>
<rect x="478" y="695" width="1" height="5"/>
<rect x="618" y="695" width="1" height="5"/>
<rect x="757" y="695" width="1" height="5"/>
<rect x="897" y="695" width="1" height="5"/>
<rect x="1036" y="695" width="1" height="5"/>
<rect x="1176" y="695" width="1" height="5"/>
<rect x="1315" y="695" width="1" height="5"/>
<rect x="1455" y="695" width="1" height="5"/>
<rect x="58" y="883" width="6" height="1"/>
<rect x="58" y="867" width="6" height="1"/>
<rect x="58" y="850" width="6" height="1"/>
<rect x="58" y="834" width="6" height="1"/>
<rect x="58" y="817" width="6" height="1"/>
<rect x="58" y="801" width="6" height="1"/>
<rect x="58" y="784" width="6" height="1"/>
<rect x="58" y="768" width="6" height="1"/>
<rect x="58" y="752" width="6" height="1"/>
<rect x="58" y="735" width="6" height="1"/>
<rect x="58" y="719" width="6" height="1"/>
<rect x="58" y="702" width="6" height="1"/>
</g>
<text x="60.5" y="691.6" font-size="9.5" text-anchor="middle" stroke="#000" stroke-width="0.25">90</text>
<text x="339.5" y="691.6" font-size="9.5" text-anchor="middle" stroke="#000" stroke-width="0.25">130</text>
<text x="618.5" y="691.6" font-size="9.5" text-anchor="middle" stroke="#000" stroke-width="0.25">170</text>
<text x="897.5" y="691.6" font-size="9.5" text-anchor="middle" stroke="#000" stroke-width="0.25">210</text>
<text x="1176.5" y="691.6" font-size="9.5" text-anchor="middle" stroke="#000" stroke-width="0.25">250</text>
<text x="1455.5" y="691.6" font-size="9.5" text-anchor="middle" stroke="#000" stroke-width="0.25">290</text>
<text x="56.3" y="886.5" font-size="9.5" text-anchor="end" stroke="#000" stroke-width="0.25">0</text>
<text x="56.3" y="853.7" font-size="9.5" text-anchor="end" stroke="#000" stroke-width="0.25">400</text>
<text x="56.3" y="820.8" font-size="9.5" text-anchor="end" stroke="#000" stroke-width="0.25">800</text>
<text x="56.3" y="788.0" font-size="9.5" text-anchor="end" stroke="#000" stroke-width="0.25">1200</text>
<text x="56.3" y="755.1" font-size="9.5" text-anchor="end" stroke="#000" stroke-width="0.25">1600</text>
<text x="56.3" y="722.3" font-size="9.5" text-anchor="end" stroke="#000" stroke-width="0.25">2000</text>
</svg></body></html>
